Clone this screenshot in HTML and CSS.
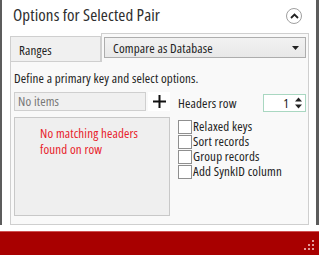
FILE: index.html
```html
<!DOCTYPE html>
<html lang="en">
<head>
    <meta charset="UTF-8">
    <meta name="viewport" content="width=device-width, initial-scale=1.0">
    <title>Options for Selected Pair</title>
    <link rel="stylesheet" href="styles.css">
</head>
<body>
    <div class="window">
        <div class="frame">
            <div class="header">
                <span class="title">Options for Selected Pair</span>
                <span class="collapse">
                    <svg width="9" height="6" viewBox="0 0 9 6"><path d="M1 5 L4.5 1.5 L8 5" fill="none" stroke="#222" stroke-width="1.8"/></svg>
                </span>
            </div>
            <div class="tabs">
                <div class="tab">Ranges</div>
                <div class="tab tab-active">
                    <div class="combo">
                        <span>Compare as Database</span>
                        <svg width="7" height="4" viewBox="0 0 7 4"><path d="M0 0 H7 L3.5 4 Z" fill="#222"/></svg>
                    </div>
                </div>
            </div>
            <div class="panel">
                <p class="hint">Define a primary key and select options.</p>
                <div class="cols">
                    <div class="keys">
                        <div class="keys-top">
                            <div class="textbox">No items</div>
                            <div class="add">
                                <svg width="13" height="13" viewBox="0 0 13 13"><path d="M6.5 0 V13 M0 6.5 H13" stroke="#111" stroke-width="2"/></svg>
                            </div>
                        </div>
                        <div class="listbox">
                            <p class="empty">No matching headers<br>found on row</p>
                        </div>
                    </div>
                    <div class="options">
                        <div class="headers-row">
                            <span>Headers row</span>
                            <div class="spin">
                                <span>1</span>
                                <svg width="7" height="12" viewBox="0 0 7 12"><path d="M0 4.5 L3.5 0.5 L7 4.5 Z M0 7.5 L3.5 11.5 L7 7.5 Z" fill="#222"/></svg>
                            </div>
                        </div>
                        <label class="check"><span class="box"></span>Relaxed keys</label>
                        <label class="check"><span class="box"></span>Sort records</label>
                        <label class="check"><span class="box"></span>Group records</label>
                        <label class="check"><span class="box"></span>Add SynkID column</label>
                    </div>
                </div>
            </div>
        </div>
        <div class="status">
            <svg class="grip" width="10" height="10" viewBox="0 0 10 10">
                <rect x="8" y="0" width="2" height="2" fill="#e39a9a"/>
                <rect x="4" y="4" width="2" height="2" fill="#e39a9a"/>
                <rect x="8" y="4" width="2" height="2" fill="#e39a9a"/>
                <rect x="0" y="8" width="2" height="2" fill="#e39a9a"/>
                <rect x="4" y="8" width="2" height="2" fill="#e39a9a"/>
                <rect x="8" y="8" width="2" height="2" fill="#e39a9a"/>
            </svg>
        </div>
    </div>
</body>
</html>
```

FILE: styles.css
```css
* {
    box-sizing: border-box;
}

html, body {
    margin: 0;
    height: 100%;
}

body {
    font-family: "Open Sans", Roboto, sans-serif;
    font-stretch: 75%;
    font-size: 13px;
    letter-spacing: 0.15px;
    color: #222;
    background-color: #fff;
    overflow: hidden;
}

.window {
    height: 255px;
    display: flex;
    flex-direction: column;
}

.frame {
    flex: 1;
    border-left: 2px solid #5c5c5c;
    border-right: 3px solid #5c5c5c;
    background-color: #fff;
}

/* header */

.header {
    height: 33px;
    display: flex;
    align-items: flex-start;
    justify-content: space-between;
    padding: 4px 14px 0 11px;
}

.title {
    font-size: 17px;
    letter-spacing: 0.1px;
    line-height: 22px;
    color: #2e2e2e;
}

.collapse {
    width: 16px;
    height: 16px;
    margin-top: 4px;
    border: 1px solid #a0a0a0;
    border-radius: 50%;
    display: flex;
    align-items: center;
    justify-content: center;
}

/* tabs */

.tabs {
    display: flex;
    margin: 0 7px 0 8px;
    height: 28px;
    position: relative;
    z-index: 1;
}

.tab {
    width: 91px;
    margin-top: 3px;
    height: 25px;
    padding: 4px 8px 0;
    line-height: 18px;
    background-color: #f0f0f0;
    border: 1px solid #cfcfcf;
    border-bottom: none;
    color: #222;
}

.tab-active {
    flex: 1;
    margin-top: 0;
    height: 29px;
    padding: 3px 2px 0 2px;
    background-color: #f9f9f9;
}

.combo {
    height: 21px;
    border: 1px solid #adadad;
    background: linear-gradient(#f2f2f2, #e8e8e8);
    display: flex;
    align-items: center;
    justify-content: space-between;
    padding: 0 6px 0 8px;
}

/* panel */

.panel {
    margin: 0 7px 0 8px;
    border: 1px solid #cfcfcf;
    background-color: #f9f9f9;
    height: 164px;
    padding: 8px 2px 7px 3px;
}

.hint {
    margin: 0;
    line-height: 16px;
}

.cols {
    display: flex;
    gap: 8px;
    margin-top: 6px;
}

.keys {
    width: 156px;
}

.keys-top {
    display: flex;
    gap: 2px;
    height: 19px;
}

.textbox {
    width: 132px;
    border: 1px solid #cfcfcf;
    background-color: #f0f0f0;
    color: #777;
    padding: 0 3px;
    line-height: 17px;
}

.add {
    flex: 1;
    background-color: #fff;
    display: flex;
    align-items: center;
    justify-content: center;
}

.listbox {
    margin-top: 6px;
    height: 99px;
    border: 1px solid #c8c8c8;
    background-color: #efefef;
    padding: 7px 0 0 25px;
}

.empty {
    margin: 0;
    color: #e8212b;
    line-height: 16px;
}

.options {
    flex: 1;
}

.headers-row {
    display: flex;
    align-items: center;
    justify-content: space-between;
    height: 20px;
    margin: 1px 0 6px;
}

.spin {
    width: 43px;
    height: 18px;
    border: 1px solid #a9d7c1;
    background-color: #fff;
    display: flex;
    align-items: center;
    justify-content: flex-end;
    gap: 6px;
    padding-right: 3px;
}

.check {
    display: flex;
    align-items: center;
    height: 15px;
    line-height: 15px;
}

.box {
    width: 14px;
    height: 14px;
    border: 1px solid #8f8f8f;
    background-color: #fff;
    margin-right: 1px;
}

/* status bar */

.status {
    height: 24px;
    margin-top: 6px;
    background-color: #a80000;
    border-top: 1px solid #d05050;
    display: flex;
    justify-content: flex-end;
    align-items: flex-end;
    padding: 0 5px 5px 0;
}
```
